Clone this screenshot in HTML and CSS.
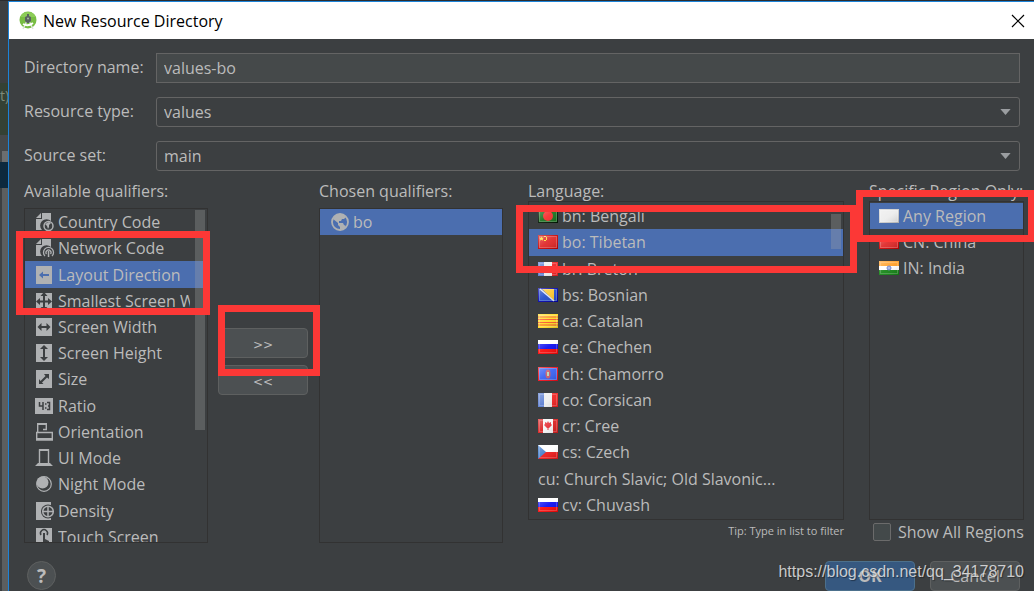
FILE: index.html
```html
<!DOCTYPE html>
<html lang="en">
<head>
<meta charset="utf-8">
<title>New Resource Directory</title>
<link rel="stylesheet" href="styles.css">
</head>
<body>
<svg class="defs" aria-hidden="true">
  <linearGradient id="gloss" x1="0" y1="0" x2="1" y2="1"><stop offset="0" stop-color="#fff" stop-opacity=".35"/><stop offset=".5" stop-color="#fff" stop-opacity=".08"/><stop offset="1" stop-color="#000" stop-opacity=".15"/></linearGradient>
  <symbol id="shine" viewBox="0 0 20 14"><rect width="20" height="14" fill="url(#gloss)"/><rect x="1.5" y="1.5" width="17" height="11" fill="none" stroke="#fff" stroke-opacity=".2"/></symbol>
  <symbol id="globe" viewBox="0 0 18 18"><circle cx="9" cy="9" r="8" fill="none" stroke="currentColor" stroke-width="1.8"/><path d="M7 1.500 12 1l3 3-2 2h-2l-1 2H8v2h4l1 2 2 1-2 3-4 1.500V14l-2-2v-2L2 6l2-3z" fill="currentColor"/></symbol>
  <symbol id="russia" viewBox="0 0 20 14"><path fill="#fff" d="M0 0h20v4H0z"/><path fill="#0909f0" d="M0 4h20v5H0z"/><path fill="#fa0505" d="M0 9h20v5H0z"/><use href="#shine"/></symbol>
  <symbol id="france" viewBox="0 0 20 14"><path fill="#587bd0" d="M0 0h7v14H0z"/><path fill="#eee" d="M6 0h8v14H6z"/><path fill="#f02020" d="M14 0h6v14h-6z"/><use href="#shine"/></symbol>
  <symbol id="china" viewBox="0 0 20 14"><rect x=".5" y=".5" width="19" height="13" fill="#df2424" stroke="#c80000"/><path fill="#ffdf32" d="m3.500 1.500.7 1.300h1.600L4.700 4l.5 1.700-1.700-1-1.700 1L2.300 4 1.200 2.800h1.600zM6 1h2v1H6zM8 2h1v3H8zM6 5h2v1H6z"/><use href="#shine"/></symbol>
</svg>

<div class="workspace">
  <aside class="backdrop" aria-hidden="true">
    <span class="strip-a"></span><span class="strip-code">t)</span><span class="strip-b"></span><span class="strip-c"></span><span class="strip-d"></span><span class="strip-e"></span>
  </aside>

  <main class="dialog" role="dialog" aria-labelledby="title">
    <header class="titlebar">
      <svg class="logo" viewBox="0 0 18 20" aria-hidden="true"><circle cx="9" cy="9" r="8.500" fill="#78bd43"/><path d="M1 6a9 9 0 0 1 16 0z" fill="#8ccc58"/><path d="M9 8 4 18M9 8l5 10" stroke="#dfe5dc" stroke-width="1.500"/><path d="M4 13q5 3 10-1" fill="none" stroke="#fff" stroke-width="1.800"/><path d="M8 3h2v2l2 1v4l-2 2H8l-2-2V6l2-1z" fill="#596260"/><circle cx="9" cy="7.500" r="1" fill="#a9b7a4"/></svg>
      <h1 id="title">New Resource Directory</h1>
      <button class="close" type="button" aria-label="Close"><svg viewBox="0 0 12 12"><path d="M0 0 12 12M12 0 0 12" stroke="#000" stroke-width="1.200"/></svg></button>
    </header>

    <form class="content">
      <div class="fields">
        <label for="dir">Directory name:</label>
        <input id="dir" class="field" type="text" value="values-bo">
        <label for="type">Resource type:</label>
        <div class="combo"><select id="type" class="field"><option>values</option></select><svg viewBox="0 0 12 7" aria-hidden="true"><path d="M0 0h12L6 7z" fill="#9a9da0"/></svg></div>
        <label for="source">Source set:</label>
        <div class="combo"><select id="source" class="field"><option>main</option></select><svg viewBox="0 0 12 7" aria-hidden="true"><path d="M0 0h12L6 7z" fill="#9a9da0"/></svg></div>
      </div>

      <div class="qualifiers">
        <section class="panel">
          <h2 id="l-avail">Available qualifiers:</h2>
          <div class="list tall">
            <ul class="rows available" role="listbox" aria-labelledby="l-avail">
              <li role="option"><svg class="icon" viewBox="0 0 18 18"><path d="M6 0h9v8a6 6 0 0 0-9 9H0V6h6z" fill="currentColor"/><path d="M0 5 5 0v5z" fill="currentColor"/><circle cx="12.500" cy="13" r="4.500" fill="none" stroke="currentColor" stroke-width="1.500"/><path d="m9 11 4-2 2 1-2 2v2l-1 2-1-3z" fill="currentColor"/></svg><span>Country Code</span></li>
              <li role="option"><svg class="icon" viewBox="0 0 18 18"><path d="M6 0h9v8a6 6 0 0 0-9 9H0V6h6z" fill="currentColor"/><path d="M0 5 5 0v5z" fill="currentColor"/><path d="M9 17a5 5 0 1 1 7 0M10.500 15a2.500 2.500 0 1 1 4 0" fill="none" stroke="currentColor" stroke-width="1.300"/><path d="M11.800 12h1.500v6h-1.500z" fill="currentColor"/></svg><span>Network Code</span></li>
              <li role="option" class="selected" aria-selected="true"><svg class="icon" viewBox="0 0 18 18"><path d="M0 0h16v18H0z" fill="currentColor"/><path d="m3 9 4-3.500V8h6v2H7v2.500z" fill="#4b6eaf"/></svg><span>Layout Direction</span></li>
              <li role="option"><svg class="icon" viewBox="0 0 18 18"><path d="M0 1h16v17H0z" fill="currentColor"/><path d="m8 0 3.500 4H9v4.500h3V6l4 3.500-4 3.500v-2.500H9V15h2.500L8 18l-3.500-3H7v-4.500H4V13L0 9.500 4 6v2.500h3V4H4.500z" fill="#3c3f41"/></svg><span>Smallest Screen Width</span></li>
              <li role="option"><svg class="icon" viewBox="0 0 18 18"><path d="M0 0h16v18H0z" fill="currentColor"/><path d="m1.500 9 4-4v3h5V5l4 4-4 4v-3h-5v3z" fill="#3c3f41"/></svg><span>Screen Width</span></li>
              <li role="option"><svg class="icon" viewBox="0 0 18 18"><path d="M0 0h16v18H0z" fill="currentColor"/><path d="m8 1 4 4H9v8h3l-4 4-4-4h3V5H4z" fill="#3c3f41"/></svg><span>Screen Height</span></li>
              <li role="option"><svg class="icon" viewBox="0 0 18 18"><path d="M0 0h16v18H0z" fill="currentColor"/><path d="M8 4h5v5l-2-1.500-5 5L7.500 14H3V9l1.500 2 5-5z" fill="#3c3f41"/></svg><span>Size</span></li>
              <li role="option"><svg class="icon" viewBox="0 0 18 18"><path d="M-1 1h18v16H-1z" fill="currentColor"/><path d="M3.500 5v4h4M7 5v8M9 7h1.500M9 11h1.500M11 5.500h2.500v7H11M12 9h2" fill="none" stroke="#3c3f41" stroke-width="1.500"/></svg><span>Ratio</span></li>
              <li role="option"><svg class="icon" viewBox="0 0 18 18"><path d="M1.700 9.500V1h8.600v5.500H7M.7 9.500h15.600v7.500H.7z" fill="none" stroke="currentColor" stroke-width="1.400"/><path d="M1 0h10v2H1zM1 15h15v2H1z" fill="currentColor"/></svg><span>Orientation</span></li>
              <li role="option"><svg class="icon" viewBox="0 0 18 18"><path d="M3.500 15V1h9v14" fill="none" stroke="currentColor" stroke-width="1.400"/><path d="M3 0h10v2H3zM2 14h12l3 3H-1z" fill="currentColor"/></svg><span>UI Mode</span></li>
              <li role="option"><svg class="icon" viewBox="0 0 18 18"><circle cx="8" cy="9" r="7.300" fill="none" stroke="currentColor" stroke-width="1.200"/><circle cx="6.500" cy="7.500" r="6" fill="currentColor"/></svg><span>Night Mode</span></li>
              <li role="option"><svg class="icon" viewBox="0 0 18 18"><path d="M0 0h15v18H0z" fill="currentColor"/><circle cx="12" cy="9.500" r="7" fill="#3c3f41"/><circle cx="12" cy="9.500" r="5.300" fill="none" stroke="currentColor" stroke-width="1.500"/><path d="M12 4v11M7 9.500h10" stroke="currentColor" stroke-width="1.500"/></svg><span>Density</span></li>
              <li role="option"><svg class="icon" viewBox="0 0 18 18"><path d="M0 0h16v18H0z" fill="currentColor"/><path d="M5 7a3.500 3.500 0 1 1 6 0" fill="none" stroke="#3c3f41" stroke-width="1.500"/><path d="M7 5h2v6l4 2v5H7l-3-4h3z" fill="#3c3f41"/></svg><span>Touch Screen</span></li>
            </ul>
            <span class="thumb"></span>
          </div>
        </section>

        <div class="transfer">
          <button class="btn" type="button">&gt;&gt;</button>
          <button class="btn" type="button">&lt;&lt;</button>
        </div>

        <section class="panel">
          <h2 id="l-chosen">Chosen qualifiers:</h2>
          <div class="list tall">
            <ul class="rows chosen" role="listbox" aria-labelledby="l-chosen">
              <li role="option" class="selected" aria-selected="true"><svg class="icon"><use href="#globe"/></svg><span>bo</span></li>
            </ul>
          </div>
        </section>

        <section class="panel language">
          <h2 id="l-lang">Language:</h2>
          <div class="list">
            <ul class="rows languages" role="listbox" aria-labelledby="l-lang">
              <li role="option"><svg class="flag" viewBox="0 0 20 14"><rect x=".5" y=".5" width="19" height="13" fill="#16701b" stroke="#001500"/><circle cx="10" cy="7" r="5" fill="#f52b2b"/><use href="#shine"/></svg><span>bn: Bengali</span></li>
              <li role="option" class="selected" aria-selected="true"><svg class="flag"><use href="#china"/></svg><span>bo: Tibetan</span></li>
              <li role="option"><svg class="flag"><use href="#france"/></svg><span>br: Breton</span></li>
              <li role="option"><svg class="flag" viewBox="0 0 20 14"><rect x=".5" y=".5" width="19" height="13" fill="#1d48c8" stroke="#0000a8"/><path d="M4 1h12v12z" fill="#fac52b"/><path d="m2 1 14 12" stroke="#e0e6f5" stroke-width="1.500"/><use href="#shine"/></svg><span>bs: Bosnian</span></li>
              <li role="option"><svg class="flag" viewBox="0 0 20 14"><path fill="#ffdb20" d="M0 0h20v14H0z"/><path d="M0 3h20M0 5.500h20M0 8.500h20M0 11h20" stroke="#f65328" stroke-width="1.200"/><use href="#shine"/></svg><span>ca: Catalan</span></li>
              <li role="option"><svg class="flag"><use href="#russia"/></svg><span>ce: Chechen</span></li>
              <li role="option"><svg class="flag" viewBox="0 0 20 14"><rect x=".5" y=".5" width="19" height="13" fill="#355df2" stroke="#f00b18"/><ellipse cx="10" cy="7" rx="2.500" ry="4.500" fill="#c95866"/><path d="M9 5h2v4H9z" fill="#b6d5b5"/><use href="#shine"/></svg><span>ch: Chamorro</span></li>
              <li role="option"><svg class="flag"><use href="#france"/></svg><span>co: Corsican</span></li>
              <li role="option"><svg class="flag" viewBox="0 0 20 14"><path fill="#d91d1d" d="M0 0h20v14H0z"/><path fill="#f5f5f5" d="M5 0h10v14H5z"/><path d="m10 2 1 2 2-1v2l1 1-3 3h-.5v2h-1V9H9L6 6l1-1V3l2 1z" fill="#e62e36"/><use href="#shine"/></svg><span>cr: Cree</span></li>
              <li role="option"><svg class="flag" viewBox="0 0 20 14"><path fill="#fff" d="M0 0h20v7H0z"/><path fill="#ec1717" d="M0 7h20v7H0z"/><path d="m0 0 8 7-8 7z" fill="#3b78ca"/><use href="#shine"/></svg><span>cs: Czech</span></li>
              <li role="option"><span>cu: Church Slavic; Old Slavonic...</span></li>
              <li role="option"><svg class="flag"><use href="#russia"/></svg><span>cv: Chuvash</span></li>
            </ul>
            <span class="thumb"></span>
          </div>
          <p class="tip">Tip: Type in list to filter</p>
        </section>

        <section class="panel region">
          <h2 id="l-region">Specific Region Only:</h2>
          <div class="list">
            <ul class="rows regions" role="listbox" aria-labelledby="l-region">
              <li role="option" class="selected" aria-selected="true"><svg class="flag" viewBox="0 0 20 14"><rect x=".5" y=".5" width="19" height="13" fill="#ececec" stroke="#ccc"/><use href="#shine"/></svg><span>Any Region</span></li>
              <li role="option"><svg class="flag"><use href="#china"/></svg><span>CN: China</span></li>
              <li role="option"><svg class="flag" viewBox="0 0 20 14"><path fill="#ff9c20" d="M0 0h20v5H0z"/><path fill="#fff" d="M0 5h20v4H0z"/><path fill="#128313" d="M0 9h20v5H0z"/><circle cx="10" cy="7" r="2" fill="#a7b6e4" stroke="#647bc9"/><use href="#shine"/></svg><span>IN: India</span></li>
            </ul>
          </div>
          <label class="check"><input type="checkbox">Show All Regions</label>
        </section>
      </div>

      <footer class="actions">
        <button class="help" type="button" aria-label="Help">?</button>
        <button class="btn primary" type="button">OK</button>
        <button class="btn" type="button">Cancel</button>
      </footer>
    </form>
  </main>

  <span class="mark mark-direction"></span>
  <span class="mark mark-add"></span>
  <span class="mark mark-language"></span>
  <span class="mark mark-region"></span>
  <p class="watermark">https://blog.csdn.net/qq_34178710</p>
</div>
</body>
</html>
```

FILE: styles.css
```css
* { box-sizing: border-box; }

body {
  margin: 0;
  overflow: hidden;
  background: #3c3f41;
  color: #bbbbbb;
  font: 16px/26px "Open Sans", "Noto Sans", sans-serif;
}

h1, h2, p, ul { margin: 0; padding: 0; font: inherit; }
ul { list-style: none; }
button, input, select { font: inherit; color: inherit; margin: 0; }
svg { display: block; flex: none; overflow: visible; }
.defs { position: absolute; width: 0; height: 0; }

.workspace {
  position: relative;
  display: flex;
  height: 100vh;
  overflow: hidden;
  border-top: 1px solid #2b2d30;
}

/* editor visible behind the dialog */
.backdrop {
  display: flex;
  flex: none;
  flex-direction: column;
  width: 8px;
  overflow: hidden;
}
.strip-a { height: 82px; background: #3c3f41; }
.strip-code { height: 52px; background: #344134; color: #7e8a78; font-size: 14px; }
.strip-b { height: 16px; background: #45484a; }
.strip-c { height: 11px; background: #6b6e70; border-left: 2px solid #45484a; }
.strip-d { height: 26px; background: #0d293e; }
.strip-e { flex: 1; background: #5b5e5f; border-left: 2px solid #3c3f41; }

.dialog {
  flex: 1;
  min-width: 0;
  border: solid #1c83d8;
  border-width: 1px 0 0 1px;
}

.titlebar {
  display: flex;
  align-items: center;
  height: 37px;
  padding: 0 10px;
  background: #fff;
  color: #000;
}
.logo { width: 18px; height: 20px; margin-right: 6px; }
.titlebar h1 { flex: 1; }
.close { padding: 0; border: 0; background: none; }
.close svg { width: 12px; height: 12px; }

.content { padding: 14px 10px 0 15px; }

.fields {
  display: grid;
  grid-template-columns: 132px 1fr;
  align-items: center;
  row-gap: 14px;
  padding-right: 4px;
}
.fields label { line-height: 28px; padding-bottom: 2px; }
.field {
  display: block;
  width: 100%;
  height: 30px;
  padding: 0 7px;
  border: 1px solid #646464;
  background: #45494a;
  outline: 0;
}
.combo { position: relative; }
.combo .field { appearance: none; background: #3c3f41; border-radius: 3px; }
.combo svg { position: absolute; right: 9px; top: 12px; width: 11px; height: 6px; }

.qualifiers {
  display: grid;
  grid-template-columns: minmax(0, 184fr) 91px minmax(0, 184fr) minmax(0, 331fr) minmax(0, 170fr);
  column-gap: 10px;
  margin-top: 7px;
}
.panel { min-width: 0; }
.panel h2 { white-space: nowrap; line-height: 26px; }
.language, .region { margin-left: 15px; }
.language h2, .region h2 { margin-bottom: -3px; }

.list {
  position: relative;
  height: 319px;
  overflow: hidden;
  border: 1px solid #323232;
  padding-top: 1px;
}
.panel:has(.tall) h2 { margin-bottom: 4px; }
.tall { height: 335px; padding-top: 0; }

.rows { display: grid; grid-template-columns: minmax(0, 1fr); grid-auto-rows: 1fr; }
.rows li {
  display: flex;
  align-items: center;
  gap: 4px;
  min-width: 0;
  min-height: 26px;
  padding-left: 9px;
  white-space: nowrap;
}
.rows .selected { background: #4b6eaf; }
.available { height: 341px; }
.languages { height: 315px; }
.available li { padding-right: 17px; }
.available span { overflow: hidden; }
.icon { width: 18px; height: 18px; color: #afb1b3; }
.available li, .chosen li { padding-left: 11px; }
.flag { width: 20px; height: 14px; }

.thumb {
  position: absolute;
  top: 1px;
  right: 2px;
  width: 10px;
  height: 220px;
  background: rgba(166, 166, 166, .3);
}
.language .thumb { top: 12px; height: 35px; }

.transfer {
  display: flex;
  flex-direction: column;
  gap: 7px;
  padding: 150px 1px 0 0;
}
.btn {
  height: 30px;
  border: 1px solid #5e6060;
  border-radius: 4px;
  background: #4c5052;
  padding: 0;
}
.transfer .btn { padding-top: 3px; font-family: "DejaVu Sans", sans-serif; font-size: 12px; }

.tip { font-size: 11px; line-height: 22px; text-align: right; }
.check {
  display: flex;
  align-items: center;
  gap: 7px;
  padding-left: 4px;
  line-height: 24px;
  white-space: nowrap;
}
.check input {
  flex: none;
  appearance: none;
  width: 18px;
  height: 18px;
  border: 1px solid #6b6b6b;
  border-radius: 2px;
  background: #43494a;
}

.actions {
  display: flex;
  gap: 15px;
  margin-top: 17px;
  padding: 0 4px 12px 3px;
}
.actions .btn { width: 90px; }
.actions .primary {
  background: #365880;
  border-color: #4c708c;
  font-weight: bold;
}
.help {
  width: 29px;
  height: 29px;
  margin-right: auto;
  padding: 0;
  border: 1px solid #5e6060;
  border-radius: 50%;
  background: #4c5052;
  font-size: 19px;
  font-weight: bold;
}

/* highlight frames drawn over the dialog */
.mark { position: absolute; border: 7px solid #fc3836; }
.mark-direction { left: 16px; top: 230px; width: 194px; height: 84px; }
.mark-add { left: 218px; top: 304px; width: 102px; height: 71px; }
.mark-language { left: 516px; top: 204px; width: 341px; height: 68px; }
.mark-region { left: 856px; top: 189px; right: -1px; height: 52px; }

.watermark {
  position: absolute;
  right: 10px;
  top: 558px;
  color: rgba(230, 230, 230, .85);
  font-family: "Liberation Sans", sans-serif;
  text-shadow: 1px 1px 1px rgba(0, 0, 0, .4);
}
```
